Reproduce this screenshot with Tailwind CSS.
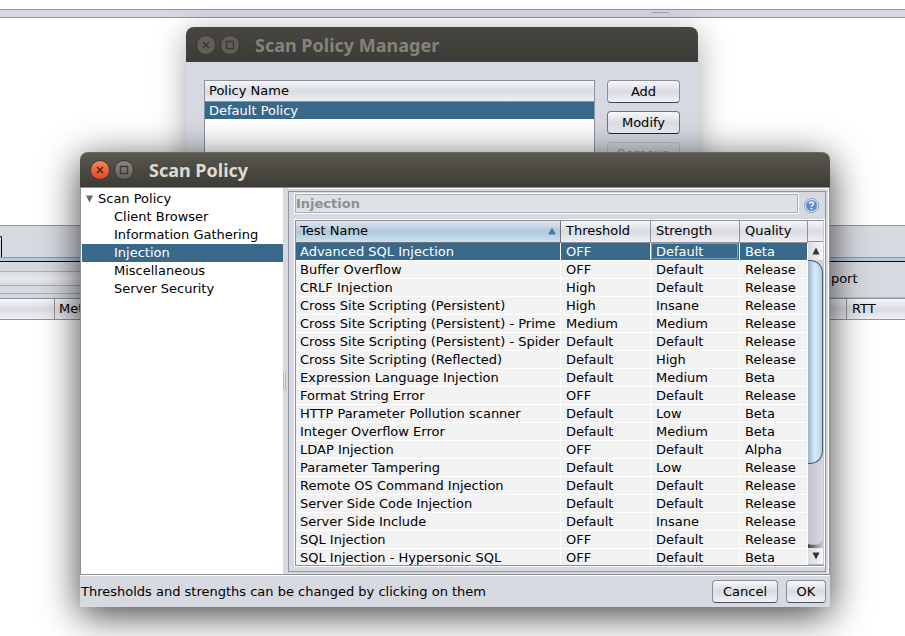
<!DOCTYPE html>
<html lang="en">
<head>
<meta charset="utf-8">
<title>Scan Policy</title>
<script src="https://cdn.jsdelivr.net/npm/@tailwindcss/browser@4"></script>
</head>
<body class="relative h-screen overflow-hidden bg-white font-['DejaVu_Sans',sans-serif] text-[13px] leading-[18px] text-black">

<!-- Main application window -->
<main class="flex h-full flex-col">
  <div class="h-[9px]"></div>
  <div class="flex h-[9px] justify-center border-y border-[#8f94a0] bg-[#d6d9e2] pl-[416px] pt-[2px]">
    <div class="h-[3px] w-[19px] rounded-t-sm border-t border-[#a0a4b0]"></div>
  </div>
  <div class="h-[207px]"></div>
  <div class="h-[33px] border-y border-[#9297a1] bg-[#d6d9e0] pt-[10px]">
    <div class="h-[21px] w-[2px] rounded-tr border-r border-t border-black"></div>
  </div>
  <div class="h-[3px] bg-[#b3cbdb]"></div>
  <div class="h-px bg-[#04091a]"></div>
  <div class="flex h-[36px] justify-between bg-[#d6d9e0]">
    <div class="flex-1 pt-[9px]">
      <div class="h-[15px] border-y border-[#a9acb6] bg-linear-to-b from-[#d9dce2] via-[#e7e8ed] to-[#d9dce2]"></div>
      <div class="mt-[7px] border-t border-[#a9acb6]"></div>
    </div>
    <div class="flex w-[90px] items-start border-b border-[#b9bcc6] pt-2"><button>Export</button></div>
  </div>
  <div class="flex h-[22px] items-center border-y border-[#8d929c] bg-linear-to-b from-[#f6f7f9] via-[#d9dbe1] to-[#eef0f6]">
    <span class="h-full flex-1 border-r border-[#8d929c] max-w-[55px]"></span>
    <span class="flex-1 pl-1">Method</span>
    <span class="h-full w-[59px] border-l border-[#8d929c] pl-[5px] pt-px">RTT</span>
  </div>
</main>

<!-- Scan Policy Manager window -->
<section class="absolute left-[186px] top-[27px] h-[400px] w-[512px] rounded-t-lg bg-[#d6d9e2] shadow-[0_6px_32px_rgba(0,0,0,0.35)]">
  <header class="flex h-[35px] items-center gap-1 rounded-t-lg bg-linear-to-b from-[#474640] to-[#3c3b37] pl-[10px]">
    <button aria-label="Close">
      <svg class="size-5" viewBox="0 0 20 20" fill="none"><circle cx="10" cy="10" r="9.5" fill="#605e57" stroke="#383733"/><path d="M7 7l6 6M13 7l-6 6" stroke="#393834" stroke-width="1.5"/></svg>
    </button>
    <button aria-label="Maximize">
      <svg class="size-5" viewBox="0 0 20 20" fill="none"><circle cx="10" cy="10" r="9.5" fill="#605e57" stroke="#383733"/><path d="M6.5 6.5h7v7h-7z" stroke="#393834" stroke-width="1.3"/></svg>
    </button>
    <h2 class="pl-[11px] font-['Noto_Sans',sans-serif] text-[18px] font-bold text-[#85827a]">Scan Policy Manager</h2>
  </header>
  <div class="flex gap-3 px-[18px] pt-[18px]">
    <div class="h-[260px] flex-1 border border-[#8d929c] bg-white">
      <table class="w-full">
        <thead><tr><th class="h-[20px] border-b border-[#8d929c] bg-linear-to-b from-[#f6f7f9] via-[#d9dbe1] to-[#eef0f6] pl-1 text-left font-normal">Policy Name</th></tr></thead>
        <tbody><tr><td class="h-[17px] bg-[#39698a] pl-1 leading-[17px] text-white">Default Policy</td></tr></tbody>
      </table>
    </div>
    <div class="flex w-[73px] flex-col gap-2">
      <button class="h-[23px] rounded-[4px] border border-[#8a8d94] border-b-[#3d4350] bg-linear-to-b from-[#f7f8fa] via-[#d9dbe0] to-[#f0f2fa]">Add</button>
      <button class="h-[23px] rounded-[4px] border border-[#70747c] border-b-[#22262e] bg-linear-to-b from-[#f7f8fa] via-[#dddfe4] to-[#f0f2fa]">Modify</button>
      <button class="h-[23px] rounded-[4px] border border-[#b9bcc4] bg-[#d2d5dc] text-[#9a9da3]" disabled>Remove</button>
    </div>
  </div>
</section>

<!-- Scan Policy dialog -->
<section class="absolute left-[80px] top-[152px] w-[750px] rounded-t-lg bg-[#d6d9e0] shadow-[0_8px_38px_rgba(0,0,0,0.75)]" role="dialog" aria-labelledby="dialog-title">
  <header class="flex h-[35px] items-center gap-1 rounded-t-lg border-t border-[#6b695f] bg-linear-to-b from-[#59574e] to-[#3d3c37] pl-[10px]">
    <button aria-label="Close">
      <svg class="size-5" viewBox="0 0 20 20" fill="none"><defs><linearGradient id="orange" x2="0" y2="1"><stop stop-color="#f6845c"/><stop offset="1" stop-color="#dc4a1c"/></linearGradient></defs><circle cx="10" cy="10" r="9.5" fill="url(#orange)" stroke="#403a34"/><path d="M7 7l6 6M13 7l-6 6" stroke="#45281d" stroke-width="1.5"/></svg>
    </button>
    <button aria-label="Maximize">
      <svg class="size-5" viewBox="0 0 20 20" fill="none"><defs><linearGradient id="grey" x2="0" y2="1"><stop stop-color="#8a887f"/><stop offset="1" stop-color="#615f58"/></linearGradient></defs><circle cx="10" cy="10" r="9.5" fill="url(#grey)" stroke="#383733"/><path d="M6.5 6.5h7v7h-7z" stroke="#3d3c37" stroke-width="1.3"/></svg>
    </button>
    <h1 id="dialog-title" class="pl-[11px] font-['Noto_Sans',sans-serif] text-[18px] font-bold text-[#dfdbd2]">Scan Policy</h1>
  </header>

  <div class="flex h-[388px] border border-[#8d9097]">
    <ul class="w-[202px] shrink-0 bg-white pl-px pt-[2px]">
      <li class="flex items-center"><svg class="ml-[3px] mr-[4px] h-[8px] w-[9px]" viewBox="0 0 9 8"><path d="M1 0.5h7L4.500 7.500z" fill="#666"/></svg>Scan Policy</li>
      <li class="pl-8">Client Browser</li>
      <li class="pl-8">Information Gathering</li>
      <li class="bg-[#39698a] pl-8 text-white">Injection</li>
      <li class="pl-8">Miscellaneous</li>
      <li class="pl-8">Server Security</li>
    </ul>
    <div class="flex w-[5px] shrink-0 items-center"><div class="h-[19px] w-[3px] rounded-sm border border-[#b3b6bf] bg-[#e3e5eb]"></div></div>
    <div class="flex min-w-0 flex-1 flex-col border-r border-t border-white pt-[2px] pr-[2px]">
      <div class="mb-[2px] flex min-h-0 flex-1 flex-col border border-[#8f94a3] p-[2px] pl-[6px] pr-px">
        <div class="flex gap-[6px]">
          <input aria-label="Category" class="h-[19px] min-w-0 flex-1 border border-[#a9acb0] bg-[#dee1e5] text-[13px] font-bold text-[#8e8f91] outline-1 outline-white" value="Injection" readonly>
          <button aria-label="Help" class="mr-[5px] pt-[3px]">
            <svg class="size-[15px]" viewBox="0 0 15 15"><circle cx="7.500" cy="7.500" r="7" fill="#dbe6f3" stroke="#839fc4"/><circle cx="7.500" cy="7.500" r="5.500" fill="#5f8ec7"/><path d="M5.500 5.800C5.500 3.300 9.700 3.400 9.400 5.900C9.200 7 7.500 7.100 7.500 8.700M7.500 10v1.500" fill="none" stroke="#fff" stroke-width="1.500"/></svg>
          </button>
        </div>
        <div class="mb-[3px] mt-[7px] flex min-h-0 flex-1 overflow-hidden border border-[#8d929c] border-r-[#c9cbd2] bg-white outline-1 outline-white">
          <table class="h-max flex-1 table-fixed whitespace-nowrap">
            <colgroup><col class="w-[264px]"><col class="w-[90px]"><col class="w-[89px]"><col class="w-[68px]"></colgroup>
            <thead>
              <tr class="h-[21px] text-left">
                <th class="border-b border-r border-[#6f747c] bg-linear-to-b from-[#dbe7f0] via-[#b1c7d9] to-[#c9e1f0] p-0 pl-1 font-normal"><div class="flex items-center justify-between pr-1">Test Name<svg class="h-[8px] w-[8px]" viewBox="0 0 8 8"><path d="M4 0.500L7.800 7.500H0.200z" fill="#4477aa"/></svg></div></th>
                <th class="border-b border-r border-[#8d929c] bg-linear-to-b from-[#f6f7f9] via-[#d9dbe1] to-[#eef0f6] p-0 pl-[5px] font-normal">Threshold</th>
                <th class="border-b border-r border-[#8d929c] bg-linear-to-b from-[#f6f7f9] via-[#d9dbe1] to-[#eef0f6] p-0 pl-[5px] font-normal">Strength</th>
                <th class="border-b border-r border-[#8d929c] bg-linear-to-b from-[#f6f7f9] via-[#d9dbe1] to-[#eef0f6] p-0 pl-[5px] font-normal">Quality</th>
              </tr>
            </thead>
            <tbody class="leading-[17px] [&_td]:h-[18px] [&_td]:border-b [&_td]:border-r [&_td]:border-white [&_td]:py-0 [&_td]:pr-0 [&_td]:pl-[5px] [&_td:first-child]:pl-1">
              <tr class="bg-[#39698a] text-white"><td>Advanced SQL Injection</td><td>OFF</td><td class="outline-1 -outline-offset-2 outline-[#74a3cb]">Default</td><td>Beta</td></tr>
              <tr class="bg-[#f2f2f2]"><td>Buffer Overflow</td><td>OFF</td><td>Default</td><td>Release</td></tr>
              <tr class="bg-[#f2f2f2]"><td>CRLF Injection</td><td>High</td><td>Default</td><td>Release</td></tr>
              <tr class="bg-[#f2f2f2]"><td>Cross Site Scripting (Persistent)</td><td>High</td><td>Insane</td><td>Release</td></tr>
              <tr class="bg-[#f2f2f2]"><td>Cross Site Scripting (Persistent) - Prime</td><td>Medium</td><td>Medium</td><td>Release</td></tr>
              <tr class="bg-[#f2f2f2]"><td>Cross Site Scripting (Persistent) - Spider</td><td>Default</td><td>Default</td><td>Release</td></tr>
              <tr class="bg-[#f2f2f2]"><td>Cross Site Scripting (Reflected)</td><td>Default</td><td>High</td><td>Release</td></tr>
              <tr class="bg-[#f2f2f2]"><td>Expression Language Injection</td><td>Default</td><td>Medium</td><td>Beta</td></tr>
              <tr class="bg-[#f2f2f2]"><td>Format String Error</td><td>OFF</td><td>Default</td><td>Release</td></tr>
              <tr class="bg-[#f2f2f2]"><td>HTTP Parameter Pollution scanner</td><td>Default</td><td>Low</td><td>Beta</td></tr>
              <tr class="bg-[#f2f2f2]"><td>Integer Overflow Error</td><td>Default</td><td>Medium</td><td>Beta</td></tr>
              <tr class="bg-[#f2f2f2]"><td>LDAP Injection</td><td>OFF</td><td>Default</td><td>Alpha</td></tr>
              <tr class="bg-[#f2f2f2]"><td>Parameter Tampering</td><td>Default</td><td>Low</td><td>Release</td></tr>
              <tr class="bg-[#f2f2f2]"><td>Remote OS Command Injection</td><td>Default</td><td>Default</td><td>Release</td></tr>
              <tr class="bg-[#f2f2f2]"><td>Server Side Code Injection</td><td>Default</td><td>Default</td><td>Release</td></tr>
              <tr class="bg-[#f2f2f2]"><td>Server Side Include</td><td>Default</td><td>Insane</td><td>Release</td></tr>
              <tr class="bg-[#f2f2f2]"><td>SQL Injection</td><td>OFF</td><td>Default</td><td>Release</td></tr>
              <tr class="bg-[#f2f2f2]"><td>SQL Injection - Hypersonic SQL</td><td>OFF</td><td>Default</td><td>Beta</td></tr>
            </tbody>
          </table>
          <div class="flex w-[15px] shrink-0 flex-col bg-[#d0d1d8]">
            <div class="h-[21px] shrink-0 border-b border-[#8d929c] bg-linear-to-b from-[#f6f7f9] via-[#d9dbe1] to-[#eef0f6]"></div>
            <button aria-label="Scroll up" class="flex h-[18px] shrink-0 items-center justify-center bg-linear-to-r from-[#d9dbe0] to-[#f5f5f7]"><svg class="size-[8px]" viewBox="0 0 8 8"><path d="M4 0.500L7.500 7.500H0.500z" fill="#333"/></svg></button>
            <div class="h-[204px] shrink-0 rounded-r-[13px] border border-l-0 border-[#3c5a75] bg-linear-to-r from-[#98b5cf] via-[#dcebf6] to-[#b5d0e2]"></div>
            <svg class="min-h-0 w-full flex-1" viewBox="0 0 15 83" preserveAspectRatio="none"><defs><linearGradient id="trough"><stop stop-color="#c3c4cb"/><stop offset="1" stop-color="#d9dae1"/></linearGradient><linearGradient id="shade"><stop stop-color="#404145"/><stop offset="1" stop-color="#d0d1d8"/></linearGradient></defs><path d="M0 0h15v83H0z" fill="url(#trough)"/><path d="M0 79Q10 82 15 75V83H0z" fill="url(#shade)"/></svg>
            <button aria-label="Scroll down" class="flex h-[17px] shrink-0 items-center justify-center border-b border-[#b7b9c0] bg-linear-to-r from-[#d9dbe0] to-[#f5f5f7]"><svg class="size-[8px]" viewBox="0 0 8 8"><path d="M0.500 0.500h7L4 7.500z" fill="#333"/></svg></button>
          </div>
        </div>
      </div>
    </div>
  </div>

  <footer class="flex h-[32px] items-center gap-2 border-t border-white pl-px pr-1">
    <p class="flex-1">Thresholds and strengths can be changed by clicking on them</p>
    <button class="h-[23px] w-[66px] rounded-[4px] border border-[#8a8d94] border-b-[#4d525c] bg-linear-to-b from-[#f7f8fa] via-[#d9dbe0] to-[#f0f2fa]">Cancel</button>
    <button class="h-[23px] w-[40px] rounded-[4px] border border-[#8a8d94] border-b-[#4d525c] bg-linear-to-b from-[#f7f8fa] via-[#d9dbe0] to-[#f0f2fa]">OK</button>
  </footer>
</section>
</body>
</html>
